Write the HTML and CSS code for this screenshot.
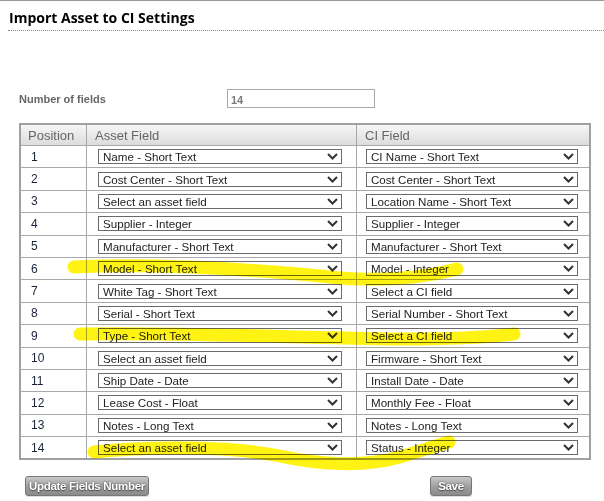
FILE: index.html
```html
<!DOCTYPE html>
<html>
<head>
<meta charset="utf-8">
<link rel="stylesheet" href="styles.css">
</head>
<body>
<div class="page">
  <h1 class="title">Import Asset to CI Settings</h1>
  <div class="count-row">
    <label class="count-label">Number of fields</label>
    <input class="count-input" type="text" value="14">
  </div>
  <table class="map">
    <thead>
      <tr><th class="c-pos">Position</th><th class="c-asset">Asset Field</th><th class="c-ci">CI Field</th></tr>
    </thead>
    <tbody id="rows"></tbody>
  </table>
  <div class="actions">
    <button class="btn btn-update">Update Fields Number</button>
    <button class="btn btn-save">Save</button>
  </div>
  <svg class="marker" width="604" height="501" viewBox="0 0 604 501">
    <path d="M74,266 C150,262 250,268 340,277 C390,281 430,275 457,268" />
    <path d="M80,333 C180,331 300,337 400,338 C450,338 490,336 514,333" />
    <path d="M94,451 C150,445 230,445 280,455 C320,464 365,466 400,456 C420,450 438,444 449,441" />
  </svg>
</div>
<script>
const data = [
  ["Name - Short Text","CI Name - Short Text"],
  ["Cost Center - Short Text","Cost Center - Short Text"],
  ["Select an asset field","Location Name - Short Text"],
  ["Supplier - Integer","Supplier - Integer"],
  ["Manufacturer - Short Text","Manufacturer - Short Text"],
  ["Model - Short Text","Model - Integer"],
  ["White Tag - Short Text","Select a CI field"],
  ["Serial - Short Text","Serial Number - Short Text"],
  ["Type - Short Text","Select a CI field"],
  ["Select an asset field","Firmware - Short Text"],
  ["Ship Date - Date","Install Date - Date"],
  ["Lease Cost - Float","Monthly Fee - Float"],
  ["Notes - Long Text","Notes - Long Text"],
  ["Select an asset field","Status - Integer"]
];
const chev = '<svg class="chev" width="11" height="7" viewBox="0 0 11 7"><path d="M1,1 L5.5,5.5 L10,1" fill="none" stroke="#333" stroke-width="2"/></svg>';
const tb = document.getElementById('rows');
data.forEach((d,i)=>{
  const tr = document.createElement('tr');
  tr.innerHTML = '<td class="c-pos">'+(i+1)+'</td>'+
    '<td class="c-asset"><span class="sel sel-asset"><select><option>'+d[0]+'</option></select>'+chev+'</span></td>'+
    '<td class="c-ci"><span class="sel sel-ci"><select><option>'+d[1]+'</option></select>'+chev+'</span></td>';
  tb.appendChild(tr);
});
</script>
</body>
</html>
```

FILE: styles.css
```css
html, body {
  margin: 0;
  padding: 0;
  background: #fff;
}
body {
  font-family: "Liberation Sans", Arial, sans-serif;
  border-top: 1px solid #9a9a9a;
}
.page {
  position: relative;
  width: 604px;
  height: 500px;
  overflow: hidden;
}
.title {
  margin: 0 0 0 8px;
  padding: 9px 0 4px 1px;
  font-family: "Open Sans", "Noto Sans", sans-serif;
  font-weight: 700;
  font-size: 14px;
  line-height: 16px;
  color: #000;
  border-bottom: 1px dotted #888;
}
.count-row {
  display: flex;
  align-items: center;
  margin-top: 58px;
  padding-left: 19px;
  height: 19px;
}
.count-label {
  width: 208px;
  font-size: 11px;
  font-weight: bold;
  color: #666;
}
.count-input {
  box-sizing: border-box;
  width: 148px;
  height: 19px;
  margin: 0;
  border: 1px solid #a8a8a8;
  padding: 2px 3px 0;
  font-family: "Liberation Sans", Arial, sans-serif;
  font-size: 11px;
  font-weight: bold;
  color: #7a7a7a;
  outline: none;
}
.map {
  margin: 15px 0 0 19px;
  width: 572px;
  border-collapse: collapse;
  border: 2px solid #a0a0a0;
  table-layout: fixed;
}
.map th {
  height: 20px;
  padding: 0 0 0 8px;
  text-align: left;
  font-weight: normal;
  font-size: 13px;
  color: #666;
  background: linear-gradient(#f6f6f6, #e4e4e4 70%, #dcdcdc);
  border: 1px solid #a8a8a8;
}
.map th.c-pos { padding-left: 7px; }
.map td {
  height: 21.4px;
  padding: 0;
  border: 1px solid #a8a8a8;
  font-size: 12px;
  color: #1a2238;
}
.map th.c-pos { width: 58px; }
.map th.c-asset { width: 261px; }
.map td.c-pos { padding-left: 10px; }
.map td.c-asset { padding-left: 11px; }
.map td.c-ci { padding-left: 9px; }
.sel {
  position: relative;
  display: block;
  height: 15px;
}
.sel-asset { width: 244px; }
.sel-ci { width: 212px; }
.sel select {
  -webkit-appearance: none;
  appearance: none;
  box-sizing: border-box;
  display: block;
  width: 100%;
  height: 15px;
  margin: 0;
  padding: 0 0 0 4px;
  border: 1px solid #6a6a6a;
  border-radius: 0;
  background: #fff;
  font-family: "Liberation Sans", Arial, sans-serif;
  font-size: 11.6px;
  line-height: 13px;
  color: #222;
}
.chev {
  position: absolute;
  right: 4px;
  top: 4px;
}
.actions {
  display: flex;
  align-items: center;
  margin-top: 16px;
  padding-left: 25px;
}
.btn {
  height: 20px;
  padding: 0;
  border: 1px solid #777;
  border-radius: 3px;
  background: linear-gradient(#c8c8c8, #9e9e9e 55%, #8a8a8a);
  color: #fff;
  font-family: "Liberation Sans", Arial, sans-serif;
  font-size: 11.5px;
  font-weight: bold;
  letter-spacing: -0.3px;
  white-space: nowrap;
  text-shadow: 0 0 2px #444, 0 1px 1px #555;
  box-shadow: 0 1px 1px rgba(0,0,0,0.15);
}
.btn-update { width: 124px; }
.btn-save { width: 42px; margin-left: 281px; }
.marker {
  position: absolute;
  left: 0;
  top: 0;
  pointer-events: none;
  mix-blend-mode: multiply;
}
.marker path {
  fill: none;
  stroke: #fff200;
  stroke-width: 13;
  stroke-linecap: round;
  stroke-linejoin: round;
  opacity: 0.92;
}
```
